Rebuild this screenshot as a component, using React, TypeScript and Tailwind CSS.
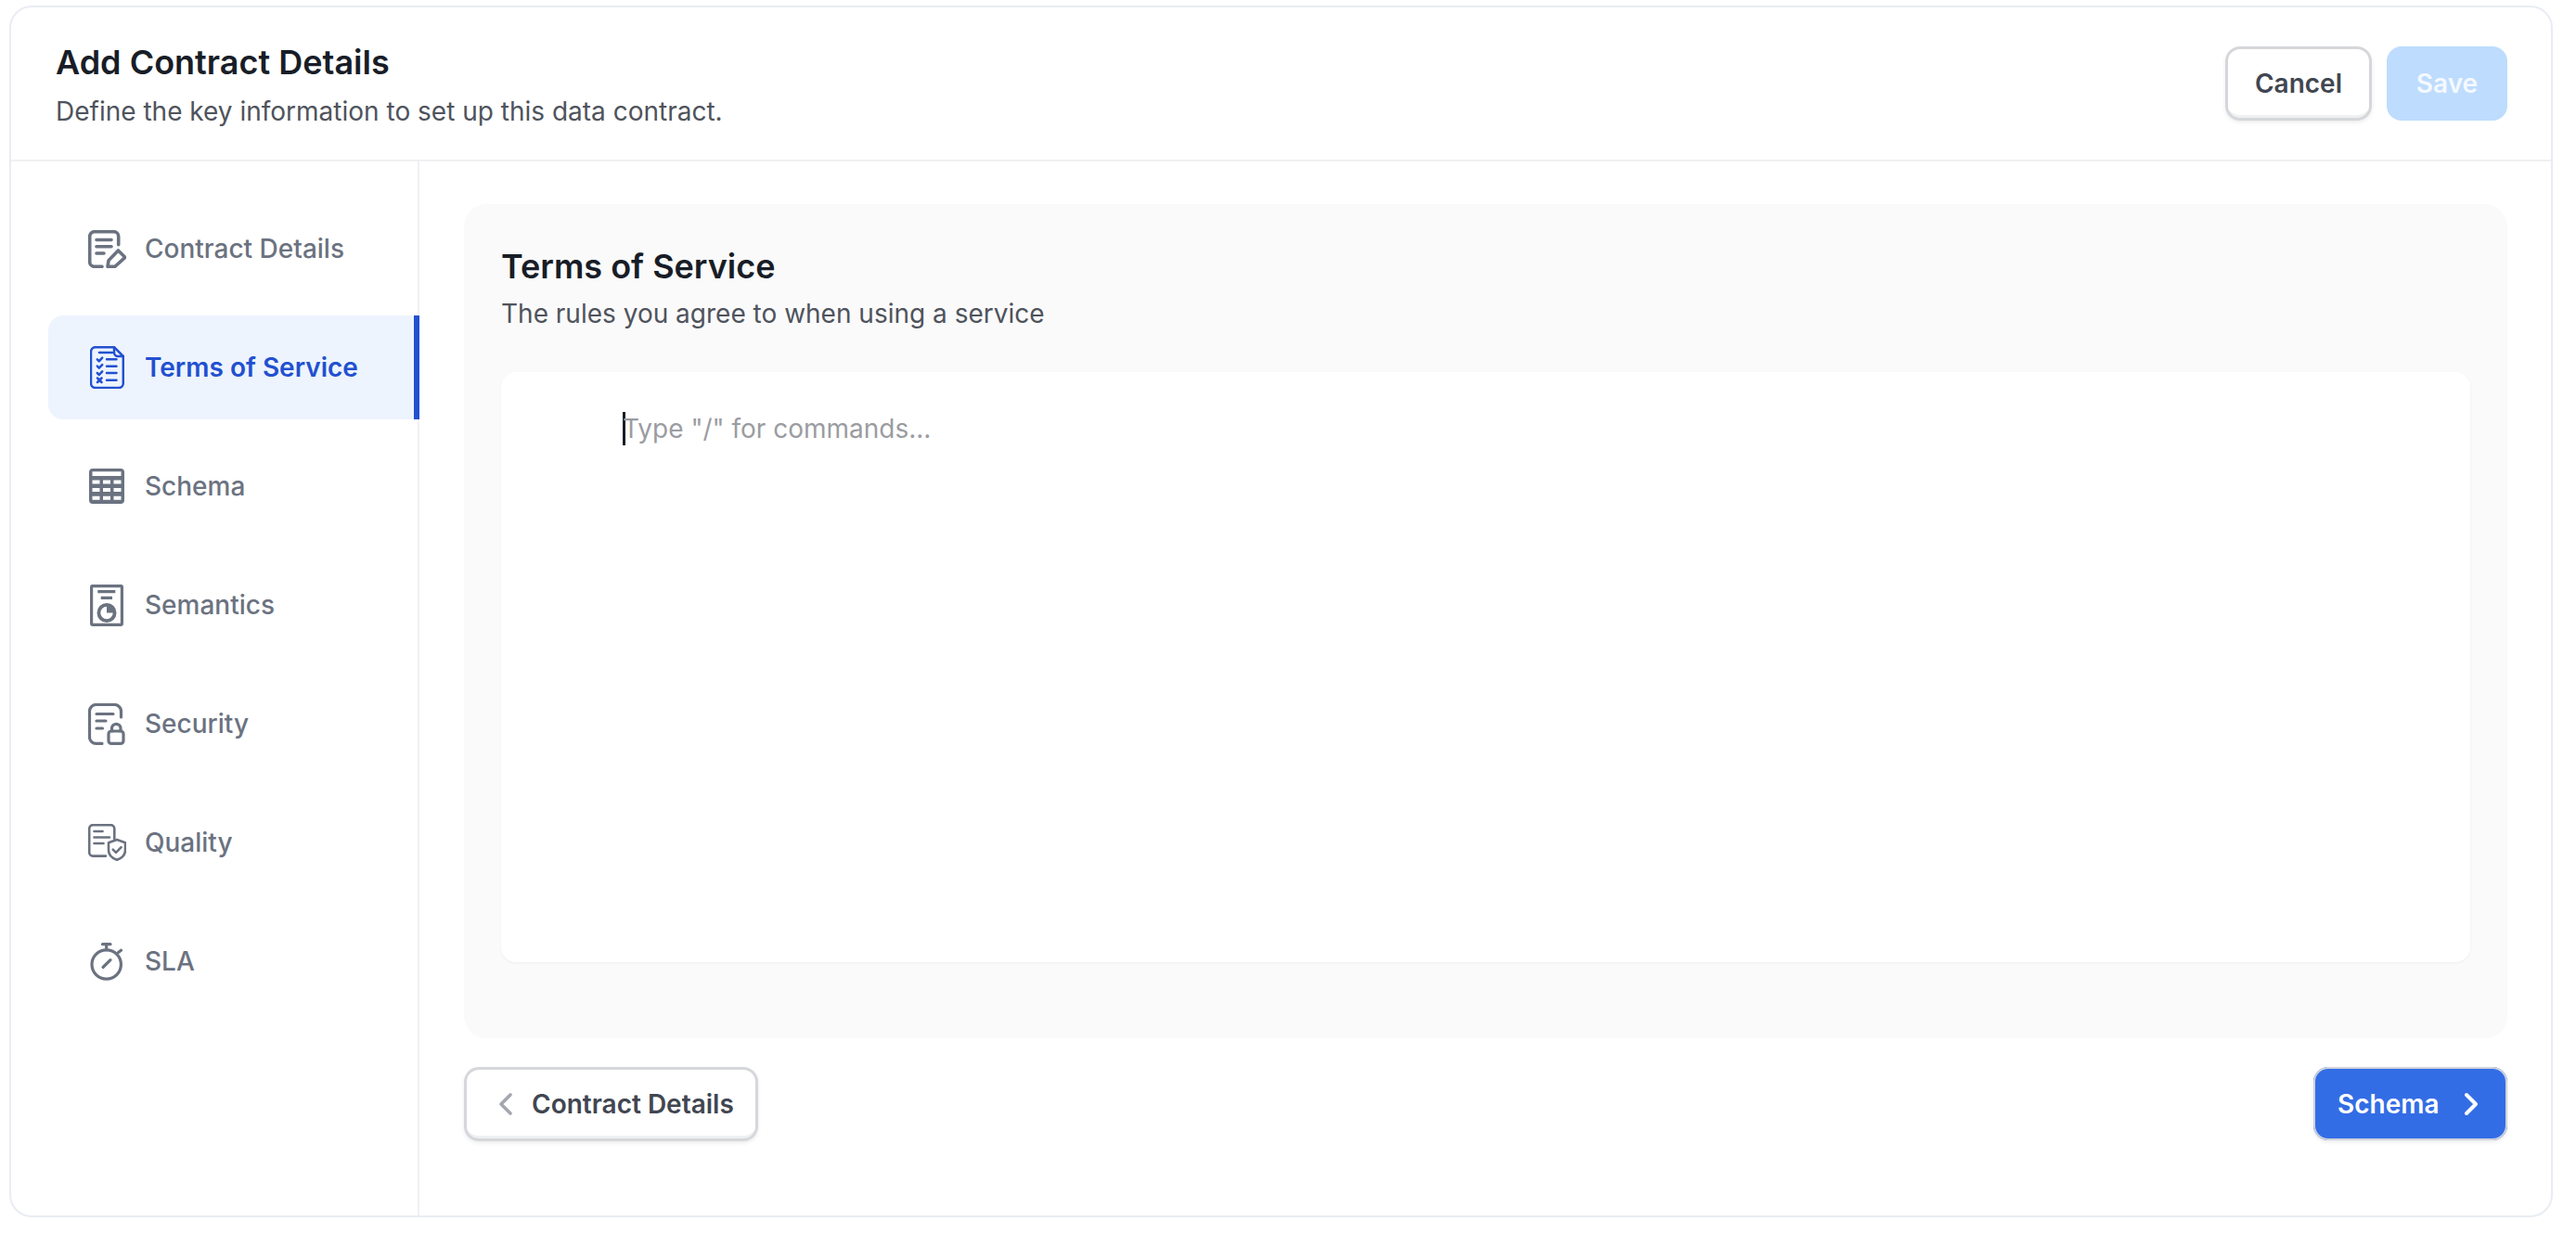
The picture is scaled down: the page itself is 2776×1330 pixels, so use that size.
import type { ReactNode } from "react";
import { ChevronLeft, ChevronRight } from "lucide-react";

function ContractIcon() {
  return (
    <svg width="41" height="41" viewBox="0 0 41 41" fill="none" stroke="currentColor" strokeWidth="3.6" strokeLinecap="round" strokeLinejoin="round">
      <path d="M15 39.300H6.700a5 5 0 0 1-5-5V6.700a5 5 0 0 1 5-5h21a5 5 0 0 1 5 5v9" />
      <path d="M9 10.500h16M9 17.800h16M9 25h8" />
      <path d="M21 39.300l1-6.600 10.400-10.800 7.400 7.400-10.800 10z" />
    </svg>
  );
}

function TermsIcon() {
  return (
    <svg width="37" height="46" viewBox="0 0 37 46" fill="none" stroke="currentColor" strokeWidth="2.5" strokeLinecap="round" strokeLinejoin="round">
      <path d="M6 1.200h20L35.800 11v29a5 5 0 0 1-5 5H6a5 5 0 0 1-5-5V6.200a5 5 0 0 1 5-5z" />
      <path d="M26 1.200V7a4 4 0 0 0 4 4h5.800" />
      <path d="M10 7h14M18 14.300h10.500M18 21.700h10.500M18 29h10.500M18 36.700h10.500" />
      <path d="M7.800 14.300l2 2 3.400-3.600M7.800 21.700l2 2 3.400-3.600M7.800 29l2 2 3.400-3.600" />
      <path d="M8 34.500l4.500 4.500M12.500 34.500L8 39" />
    </svg>
  );
}

function SchemaIcon() {
  return (
    <svg width="38" height="38" viewBox="0 0 38 38" fill="currentColor">
      <path
        fillRule="evenodd"
        d="M4 0h30a4 4 0 0 1 4 4v30a4 4 0 0 1-4 4H4a4 4 0 0 1-4-4V4a4 4 0 0 1 4-4zM3.500 3.300V8h31V3.300zM3.500 12.500v4h8v-4zM15 12.500v4h8v-4zM26.500 12.500v4h8v-4zM3.500 21v4h8v-4zM15 21v4h8v-4zM26.500 21v4h8v-4zM3.500 29.800v4h8v-4zM15 29.800v4h8v-4zM26.500 29.800v4h8v-4z"
      />
    </svg>
  );
}

function SemanticsIcon() {
  return (
    <svg width="36" height="45" viewBox="0 0 36 45" fill="none" stroke="currentColor" strokeWidth="3.2">
      <rect x="1.600" y="1.600" width="32.800" height="41.800" rx="0.800" />
      <path d="M8.300 7.700h19M11.700 14.300H24" />
      <circle cx="18" cy="30.500" r="8.600" strokeWidth="3.800" />
      <path d="M18 22v8.500h8.500A8.500 8.500 0 0 0 18 22z" fill="currentColor" stroke="none" />
    </svg>
  );
}

function SecurityIcon() {
  return (
    <svg width="40" height="45" viewBox="0 0 40 45" fill="none" stroke="currentColor" strokeWidth="3.2" strokeLinecap="round" strokeLinejoin="round">
      <path d="M15 43.400H8.500a7 7 0 0 1-7-7V8.500a7 7 0 0 1 7-7h20a7 7 0 0 1 7 7V15" />
      <path d="M9 11.500h18M9 19h10M9 27h6.500" />
      <rect x="22" y="30" width="16" height="13.400" rx="3" />
      <path d="M25.500 30v-3.500a4.800 4.800 0 0 1 9.500 0V30" />
    </svg>
  );
}

function QualityIcon() {
  return (
    <svg width="41" height="40" viewBox="0 0 41 40" fill="none" stroke="currentColor" strokeWidth="2.6" strokeLinecap="round" strokeLinejoin="round">
      <path d="M19 34.600H5a3.800 3.800 0 0 1-3.800-3.800V5A3.800 3.800 0 0 1 5 1.200h19.500a3.800 3.800 0 0 1 3.800 3.800v11" />
      <path d="M6.500 8h9M6.500 14.500H23M6.500 21h10" />
      <path d="M31 17l9 3.200v8c0 5.500-4 8.800-9 10.600-5-1.800-9-5.100-9-10.600v-8z" />
      <path d="M26.700 27.600l3.300 3.300 5.600-5.800" />
    </svg>
  );
}

function SlaIcon() {
  return (
    <svg width="36" height="41" viewBox="0 0 36 41" fill="none" stroke="currentColor" strokeWidth="3.2" strokeLinecap="round">
      <circle cx="17.700" cy="23.500" r="15.700" />
      <path d="M13.500 1.700h8.500M17.700 1.700v6M30.500 10.500l3-2.300M14 26.500l8-7.800" />
    </svg>
  );
}

const NAV_ITEMS: { label: string; icon: ReactNode; active?: boolean }[] = [
  { label: "Contract Details", icon: <ContractIcon /> },
  { label: "Terms of Service", icon: <TermsIcon />, active: true },
  { label: "Schema", icon: <SchemaIcon /> },
  { label: "Semantics", icon: <SemanticsIcon /> },
  { label: "Security", icon: <SecurityIcon /> },
  { label: "Quality", icon: <QualityIcon /> },
  { label: "SLA", icon: <SlaIcon /> },
];

const outlineButton =
  "flex h-[80px] items-center rounded-[16px] bg-white text-[28px] font-semibold text-[#414651] shadow-[inset_0_0_0_3px_#d5d7da,inset_0_-6px_0_#eff0f2,0_2px_4px_rgba(10,13,18,0.08)]";

export default function App() {
  return (
    <div className="min-h-[1330px] bg-white pl-[10px] pt-[6px] font-['Inter',sans-serif]">
      <div className="h-[1306px] w-[2741px] rounded-[24px] border-2 border-[#e9ecf3] bg-white">
        <header className="flex h-[166px] items-center justify-between border-b-2 border-[#eff0f3] pl-[48px] pr-[47px]">
          <div>
            <h1 className="text-[36px] leading-[53px] font-semibold text-[#181d27]">Add Contract Details</h1>
            <p className="mt-[6px] text-[28px] leading-[40px] text-[#4f535c]">Define the key information to set up this data contract.</p>
          </div>
          <div className="flex gap-[16px]">
            <button className={`${outlineButton} w-[158px] justify-center`}>Cancel</button>
            <button className="flex h-[80px] w-[130px] items-center justify-center rounded-[16px] bg-[#bedcfe] text-[28px] font-semibold text-[#f4f9ff]">
              Save
            </button>
          </div>
        </header>

        <div className="flex">
          <nav className="flex h-[1136px] w-[440px] flex-col gap-[16px] border-r-2 border-[#eff0f3] pl-[40px] pt-[38px]">
            {NAV_ITEMS.map((item) => (
              <div
                key={item.label}
                className={
                  item.active
                    ? "mr-[-2px] flex h-[112px] items-center gap-[19px] rounded-l-[16px] border-r-[6px] border-[#2250d0] bg-[#edf4fe] pl-[41px] text-[28px] font-semibold text-[#2250d0]"
                    : "mr-[-2px] flex h-[112px] items-center gap-[19px] pl-[41px] text-[28px] font-medium text-[#6b7280]"
                }
              >
                <span className="flex w-[44px] justify-center">{item.icon}</span>
                {item.label}
              </div>
            ))}
          </nav>

          <main className="w-[2297px] pl-[48px] pr-[47px] pt-[46px]">
            <section className="h-[899px] rounded-[24px] bg-[#fafafa] p-[40px]">
              <h2 className="text-[36px] leading-[54px] font-semibold text-[#181d27]">Terms of Service</h2>
              <p className="mt-[4px] text-[28px] leading-[40px] text-[#4f535c]">The rules you agree to when using a service</p>
              <div className="mt-[43px] h-[636px] rounded-[16px] bg-white pl-[131px] pt-[41px] shadow-[0_1px_3px_rgba(16,24,40,0.05)]">
                <div className="flex h-[40px] items-center text-[28px] text-[#9b9ca1]">
                  <span className="mr-[-3px] h-[36px] w-[3px] bg-[#181d27]" />
                  Type "/" for commands...
                </div>
              </div>
            </section>

            <div className="mt-[31px] flex justify-between">
              <button className={`${outlineButton} h-[79px] w-[317px] gap-[8px] pl-[25px]`}>
                <ChevronLeft size={40} strokeWidth={2.2} className="text-[#a4a7ae]" />
                Contract Details
              </button>
              <button className="flex h-[79px] w-[209px] items-center gap-[14px] rounded-[16px] bg-[#336de5] pl-[26px] text-[28px] font-semibold text-white shadow-[inset_0_0_0_2px_#cfd3dc,0_2px_4px_rgba(10,13,18,0.08)]">
                Schema
                <ChevronRight size={40} strokeWidth={2.4} />
              </button>
            </div>
          </main>
        </div>
      </div>
    </div>
  );
}
